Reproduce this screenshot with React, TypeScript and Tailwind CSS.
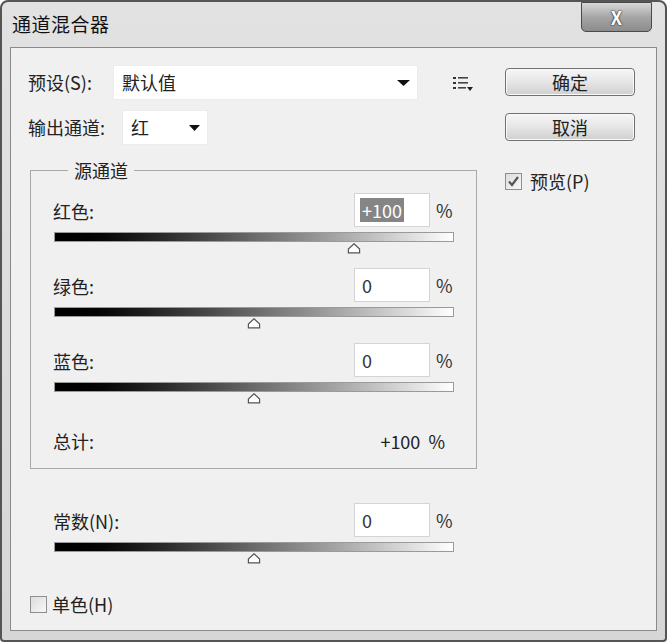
import React from 'react';

const font = { fontFamily: '"Noto Sans CJK SC", "Noto Sans", sans-serif' };

const DownArrow: React.FC<{ w?: number }> = ({ w = 12 }) => (
  <svg width={w} height={6} viewBox={`0 0 ${w} 6`}>
    <path d={`M0 0 L${w} 0 L${w / 2} 6 Z`} fill="#111" />
  </svg>
);

const Thumb: React.FC = () => (
  <svg width={14} height={11} viewBox="0 0 14 11">
    <path d="M7 0.8 L12.6 6 L12.6 9.8 L1.4 9.8 L1.4 6 Z" fill="#fff" stroke="#555" strokeWidth={1.2} />
  </svg>
);

const MenuIcon: React.FC = () => (
  <svg width={20} height={16} viewBox="0 0 20 16">
    <rect x="0" y="1" width="3" height="2" fill="#333" />
    <rect x="5" y="1" width="10" height="1.6" fill="#444" />
    <rect x="0" y="6" width="3" height="2" fill="#333" />
    <rect x="5" y="6" width="10" height="1.6" fill="#444" />
    <rect x="0" y="11" width="3" height="2" fill="#333" />
    <rect x="5" y="11" width="8" height="1.6" fill="#444" />
    <path d="M14 11 L20 11 L17 15 Z" fill="#222" />
  </svg>
);

type Channel = { label: string; value: number; selected?: boolean };

const SliderBlock: React.FC<Channel> = ({ label, value, selected }) => {
  const pos = ((value + 200) / 400) * 400;
  const text = value > 0 ? `+${value}` : `${value}`;
  return (
    <div className="w-[401px]">
      <div className="flex items-center h-[34px]">
        <div className="flex-1 text-[18px] text-[#222] pt-[2px]">{label}</div>
        <div className="w-[76px] h-[34px] bg-white border border-[#d4d4d4] flex items-center pl-[5px] text-[18px] text-[#333]">
          {selected ? (
            <span className="bg-[#858585] text-white px-[2px] leading-[24px]">{text}</span>
          ) : (
            <span className="pl-[2px]">{text}</span>
          )}
        </div>
        <div className="ml-[6px] w-[18px] text-[18px] text-[#333]">%</div>
      </div>
      <div className="mt-[5px] ml-[1px] w-[400px] h-[10px] border border-[#9a9a9a] bg-gradient-to-r from-[#000] via-[#6a6a6a] to-[#fff]" />
      <div className="h-[10px] pt-[1px]" style={{ paddingLeft: pos - 6 }}>
        <Thumb />
      </div>
    </div>
  );
};

const Button: React.FC<{ label: string }> = ({ label }) => (
  <div className="w-[130px] h-[28px] rounded-[4px] border border-[#707070] bg-gradient-to-b from-[#f6f6f6] via-[#e6e6e6] to-[#cfcfcf] flex items-center justify-center text-[18px] text-[#222] shadow-[inset_0_0_0_1px_#fafafa]">
    {label}
  </div>
);

const Checkbox: React.FC<{ checked?: boolean }> = ({ checked }) => (
  <div className="w-[17px] h-[17px] border border-[#8e8e8e] bg-gradient-to-br from-[#dcdcdc] to-[#f8f8f8] flex items-center justify-center">
    {checked && (
      <svg width={13} height={13} viewBox="0 0 13 13">
        <path d="M2 6.5 L5 10 L11 2" fill="none" stroke="#555" strokeWidth={2.2} />
      </svg>
    )}
  </div>
);

const App: React.FC = () => {
  const channels: Channel[] = [
    { label: '红色:', value: 100, selected: true },
    { label: '绿色:', value: 0 },
    { label: '蓝色:', value: 0 },
  ];

  return (
    <div className="w-[667px] h-[642px] border-2 border-[#555] rounded-t-[8px] rounded-b-[4px] bg-gradient-to-b from-[#e2e2e2] to-[#d6d6d6] overflow-hidden" style={font}>
      {/* Title bar */}
      <div className="h-[45px] flex items-start justify-between">
        <div className="pl-[10px] pt-[8px] text-[19px] text-[#111] tracking-[0.5px]">通道混合器</div>
        <div className="mr-[13px] mt-[0px] w-[71px] h-[30px] rounded-b-[5px] border border-[#4a4a4a] bg-gradient-to-b from-[#d8d8d8] via-[#a6a6a6] to-[#8c8c8c] flex items-center justify-center text-[18px] font-bold text-white [text-shadow:0_0_2px_#222,0_0_1px_#222]">
          X
        </div>
      </div>

      {/* Content */}
      <div className="mx-[8px] h-[584px] border border-[#8a8a8a] bg-[#f0f0f0] flex text-[#222]">
        {/* Left column */}
        <div className="w-[466px] pl-[17px] pt-[17px]">
          <div className="flex items-center h-[35px]">
            <div className="w-[85px] text-[18px]">预设(S):</div>
            <div className="w-[305px] h-[35px] bg-white border border-[#ececec] flex items-center justify-between pl-[8px] pr-[7px]">
              <span className="text-[18px]">默认值</span>
              <DownArrow w={13} />
            </div>
            <div className="ml-[35px] pt-[3px]">
              <MenuIcon />
            </div>
          </div>

          <div className="flex items-center h-[35px] mt-[10px]">
            <div className="w-[94px] text-[18px]">输出通道:</div>
            <div className="w-[86px] h-[35px] bg-white border border-[#ececec] flex items-center justify-between pl-[8px] pr-[7px]">
              <span className="text-[18px]">红</span>
              <DownArrow w={11} />
            </div>
          </div>

          <fieldset className="ml-[2px] mt-[15px] w-[447px] border border-[#a8a8a8] pl-[22px] pb-[17px]">
            <legend className="ml-[15px] px-[6px] text-[18px] leading-[20px]">源通道</legend>
            <div className="pt-[13px] flex flex-col gap-[16px]">
              {channels.map((c) => (
                <SliderBlock key={c.label} {...c} />
              ))}
            </div>
            <div className="mt-[29px] w-[401px] h-[20px] flex items-center justify-between pr-[9px] text-[18px]">
              <span>总计:</span>
              <span>+100&nbsp;&nbsp;%</span>
            </div>
          </fieldset>

          <div className="ml-[25px] mt-[34px]">
            <SliderBlock label="常数(N):" value={0} />
          </div>

          <div className="ml-[2px] mt-[29px] flex items-center">
            <Checkbox />
            <span className="ml-[5px] text-[18px]">单色(H)</span>
          </div>
        </div>

        {/* Right column */}
        <div className="ml-[28px] pt-[20px] flex flex-col">
          <Button label="确定" />
          <div className="mt-[17px]">
            <Button label="取消" />
          </div>
          <div className="mt-[27px] flex items-center">
            <Checkbox checked />
            <span className="ml-[8px] text-[18px]">预览(P)</span>
          </div>
        </div>
      </div>
    </div>
  );
};

export default App;
